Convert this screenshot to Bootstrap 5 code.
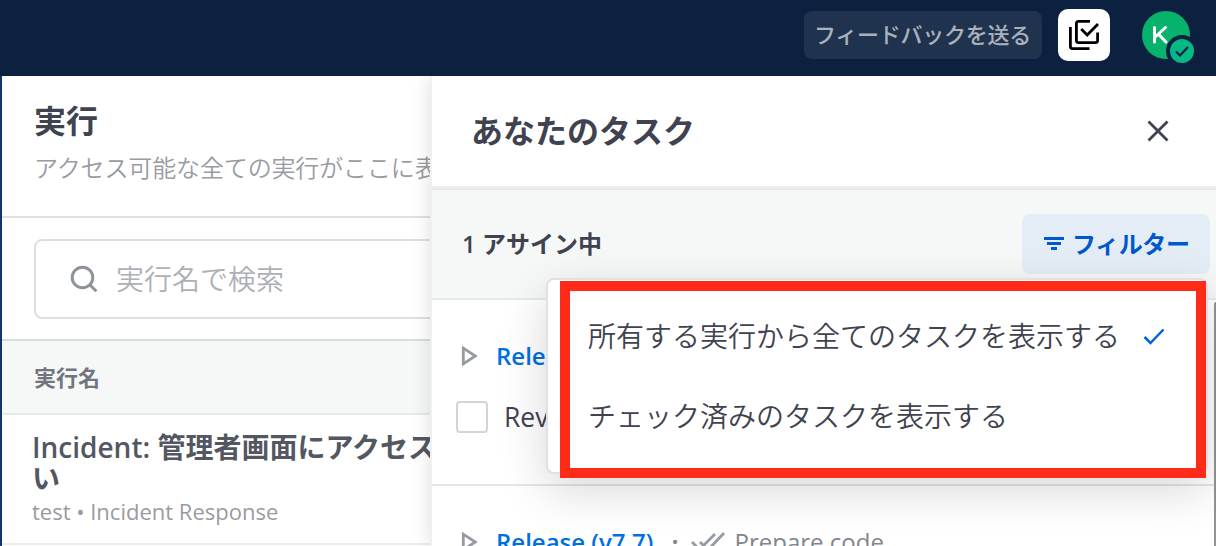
<!DOCTYPE html>
<html lang="ja">
<head>
<meta charset="utf-8">
<meta name="viewport" content="width=device-width, initial-scale=1">
<title>あなたのタスク</title>
<link href="https://cdn.jsdelivr.net/npm/bootstrap@5.3.0/dist/css/bootstrap.min.css" rel="stylesheet">
<style>
body{font-family:"Open Sans","Noto Sans CJK JP",sans-serif;color:#3f4350;height:546px;overflow:hidden;background:#fff}
svg{display:block;flex:none}
.topbar{height:76px;background:#0c213f;padding:0 22px 6px 0}
.avatar{margin-top:4px}
.feedback{width:238px;height:48px;border-radius:8px;background:#20334e;color:#a9b1bc;font-size:22px;font-weight:500;letter-spacing:-.25px;line-height:44px;padding:0 1px 2px 0;border:0}
.check-btn{width:52px;height:52px;border-radius:10px;background:#fff;margin:0 32px 0 16px;padding:10px;border:0}
.workspace{height:470px}
.runs{width:430px;border-left:2px solid #12366a;white-space:nowrap}
.runs-head{height:142px;border-bottom:2px solid #e0e0e1;padding:21px 0 0 32px}
.runs-head h1{font-size:32px;font-weight:700;line-height:48px;margin:0}
.runs-head p{font-size:24px;line-height:36px;margin:5px 0 0;color:#999ba2;letter-spacing:-.13px;font-weight:350}
.search-wrap{height:123px;padding:21px 0 0 32px;border-bottom:2px solid #dadcdc}
.search-box{width:560px;height:80px;border:2px solid #dfdfe1;border-radius:8px;padding-left:34px;font-size:28px;color:#adb0b7;gap:17px;font-weight:350}
.search-box svg{margin:2px 0 0 0}
.col-label{height:74px;background:#f6f8f8;border-bottom:2px solid #e7e9e9;padding-left:32px;font-size:22px;font-weight:700;color:#72757e;line-height:72px}
.run-item{height:130px;border-bottom:2px solid #ececed;padding:17px 0 0 30px}
.run-name{font-size:28px;font-weight:600;line-height:31px;color:#535761}
.run-meta{font-size:22px;line-height:30px;color:#999ba2;margin-top:2px}
.tasks{border-left:2px solid #f0f0f0;box-shadow:0 0 18px rgba(0,0,0,.13);clip-path:inset(0 0 0 -30px);background:#fff}
.tasks-head{height:112px;border-bottom:2px solid #efefef;padding:0 47px 0 39px}
.tasks-head h2{font-size:32px;font-weight:700;margin:0;line-height:48px;padding-bottom:1px}
.assigned{height:112px;background:#f6f8f8;border-top:2px solid #e8e9e9;border-bottom:2px solid #e8e9e9;padding:0 6px 0 30px}
.assigned-label{font-size:24px;font-weight:600;line-height:36px}
.filter-btn{width:188px;height:60px;border-radius:8px;background:#e4ecf6;color:#0058cc;font-size:24px;font-weight:700;letter-spacing:-.4px;gap:8px;border:0;padding:0 0 0 22px}
.task-group{height:186px;border-bottom:2px solid #e5e5e6;padding:0 24px}
.group-title{height:36px;font-size:24px;font-weight:600;color:#0070e0;line-height:36px}
.task-group,.next-group{padding-top:38px}
.task-line{font-size:26.5px;line-height:40px;margin-top:22px;gap:16px}
.task-line span+span{padding-top:1px}
.task-check{width:32px;height:32px;border:2px solid #d3d4d9;border-radius:4px;background:#fff}
.next-task{color:#82858d;font-weight:400;font-size:24px}
.separator{font-size:19px;margin:0 12px 0 18px}
.filter-menu{position:absolute;left:114px;top:202px;width:662px;height:196px;border:2px solid #e0e1e2;border-radius:8px;background:#fff;box-shadow:0 16px 48px rgba(0,0,0,.16);z-index:2;padding-top:16px}
.highlight{position:absolute;left:12px;top:1px;width:646px;height:197px;border:10px solid #ff2a18}
.menu-row{height:80px;padding:0 33px 0 40px;font-size:28px;font-weight:350}
.scroll-thumb{position:absolute;right:0;top:226px;width:2px;height:244px;background:#929395;border-radius:2px 0 0 0}
</style>
</head>
<body class="d-flex flex-column">
<header class="topbar d-flex align-items-center justify-content-end">
  <button class="feedback">フィードバックを送る</button>
  <button class="check-btn"><svg width="32" height="32" viewBox="0 0 32 32" fill="none" stroke="#000" stroke-width="2.8"><path d="M22 2.4H10.400Q8.400 2.400 8.400 4.400V21.600Q8.400 23.600 10.400 23.600H27.600Q29.600 23.600 29.600 21.600V13.500M2.400 8V27.600Q2.400 29.600 4.400 29.600H21.500M13.200 10L19.200 16L30 5"/></svg></button>
  <svg class="avatar" width="52" height="52" viewBox="0 0 52 52"><circle cx="24" cy="24" r="24" fill="#06b26c"/><path d="M12.500 16.500V31M23.500 16.500L13.200 26M16.300 23L24 31" stroke="#fff" stroke-width="3" stroke-linecap="round" fill="none"/><circle cx="40" cy="40" r="16" fill="#0c213f"/><circle cx="40" cy="40" r="12" fill="#06b886"/><path d="M34 40.500L38 44.500L46 36" fill="none" stroke="#0c213f" stroke-width="2.200"/></svg>
</header>
<div class="workspace d-flex">
  <main class="runs flex-shrink-0 overflow-hidden">
    <section class="runs-head"><h1>実行</h1><p>アクセス可能な全ての実行がここに表</p></section>
    <section class="search-wrap">
      <div class="search-box d-flex align-items-center"><svg width="29" height="30" viewBox="0 0 29 30" fill="none" stroke="#8e929b" stroke-width="3"><circle cx="12.500" cy="12.500" r="10.300"/><path d="M19.800 19.800L26.300 26.300"/></svg><span>実行名で検索</span></div>
    </section>
    <div class="col-label">実行名</div>
    <article class="run-item"><div class="run-name">Incident: 管理者画面にアクセス<br>い</div><div class="run-meta">test • Incident Response</div></article>
  </main>
  <aside class="tasks flex-grow-1 position-relative">
    <div class="tasks-head d-flex align-items-center justify-content-between"><h2>あなたのタスク</h2><svg width="22" height="22" viewBox="0 0 22 22" stroke="#3f4350" stroke-width="2.800"><path d="M1.500 1.500L20.500 20.500M20.500 1.500L1.500 20.500"/></svg></div>
    <div class="assigned d-flex align-items-center justify-content-between">
      <span class="assigned-label">1 アサイン中</span>
      <button class="filter-btn d-flex align-items-center"><svg width="20" height="14" viewBox="0 0 20 14" fill="#0058cc"><path d="M0 0h20v3H0zM3 5h14v3H3zM7 10h6v3H7z"/></svg><span>フィルター</span></button>
    </div>
    <section class="task-group overflow-hidden">
      <div class="group-title d-flex align-items-center"><svg class="ms-1 me-3" width="20" height="20" viewBox="0 0 20 20" fill="none" stroke="#969aa2" stroke-width="2.800"><path d="M3.300 2.200V17.800L15.300 10z"/></svg><span>Rele</span></div>
      <div class="task-line d-flex align-items-center"><span class="task-check"></span><span>Rev</span></div>
    </section>
    <section class="next-group px-4">
      <div class="group-title d-flex align-items-center"><svg class="ms-1 me-3" width="20" height="20" viewBox="0 0 20 20" fill="none" stroke="#969aa2" stroke-width="2.800"><path d="M3.300 2.200V17.800L15.300 10z"/></svg><span>Release (v7.7)</span><span class="next-task d-flex align-items-center"><span class="separator">•</span><svg width="36" height="20" viewBox="0 0 36 20" fill="none" stroke="#969aa2" stroke-width="2.800"><path d="M1 10L9 18M9 10L17 18L33 1M13 13L24 2"/></svg><span class="ms-2">Prepare code</span></span></div>
    </section>
    <div class="scroll-thumb"></div>
    <div class="filter-menu">
      <div class="menu-row d-flex align-items-center justify-content-between"><span>所有する実行から全てのタスクを表示する</span><svg class="me-2" width="22" height="17" viewBox="0 0 22 17" fill="none" stroke="#0062e6" stroke-width="2.500"><path d="M1.500 9L7.500 15L20.500 1.500"/></svg></div>
      <div class="menu-row d-flex align-items-center">チェック済みのタスクを表示する</div>
      <div class="highlight"></div>
    </div>
  </aside>
</div>
<script src="https://cdn.jsdelivr.net/npm/bootstrap@5.3.0/dist/js/bootstrap.bundle.min.js"></script>
</body>
</html>
